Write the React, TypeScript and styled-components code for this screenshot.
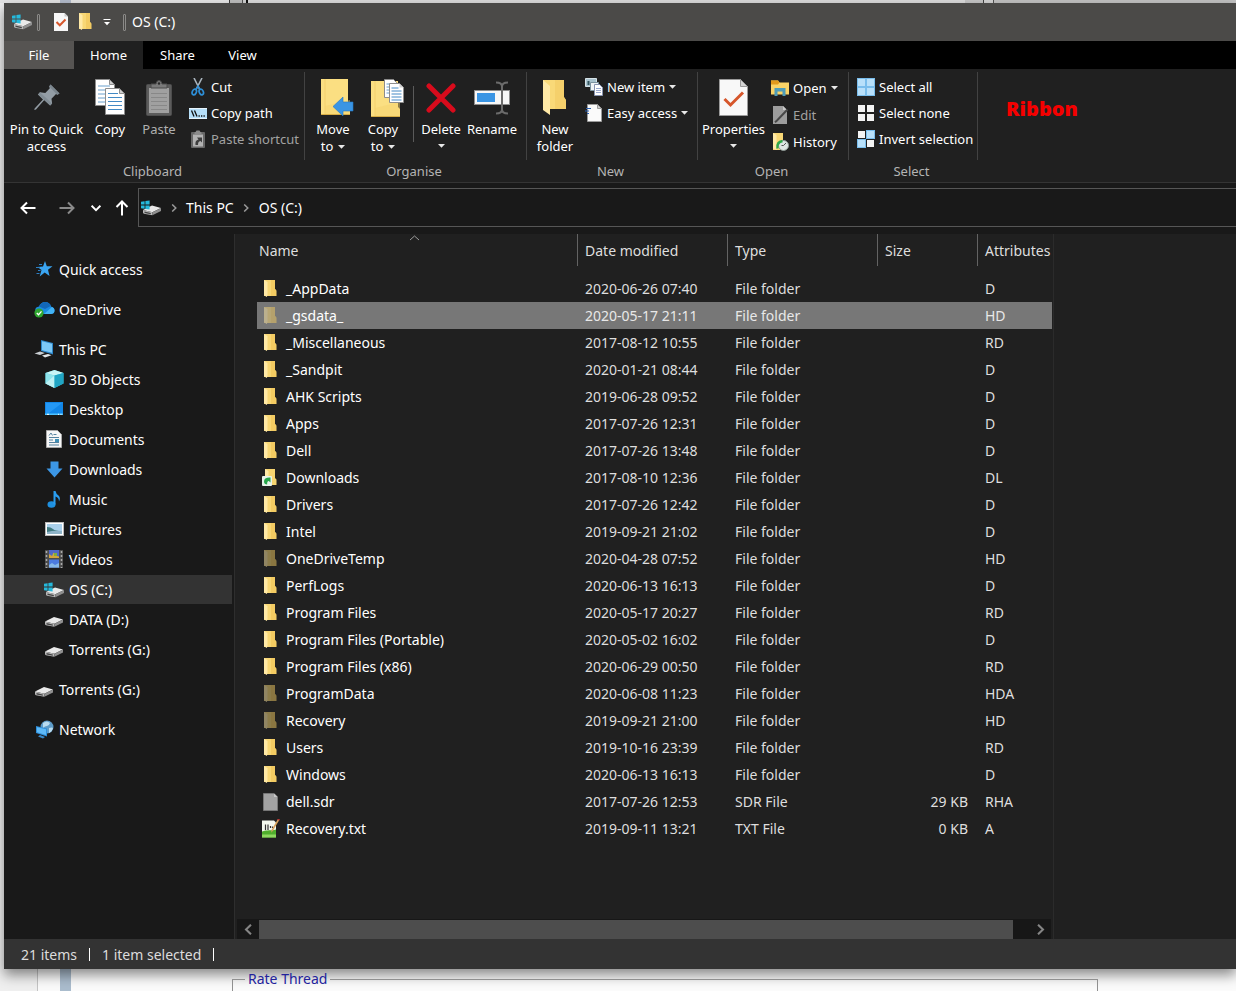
import React from "react";
import styled, { createGlobalStyle, css } from "styled-components";

const font = '"Noto Sans", "Open Sans", "Liberation Sans", sans-serif';

const GlobalStyle = createGlobalStyle`
  *, *::before, *::after { box-sizing: border-box; }
  html, body { margin: 0; padding: 0; }
  body { font-family: ${font}; font-size: 14px; color: #fff; overflow: hidden; }
  button { font: inherit; color: inherit; background: none; border: 0; padding: 0; margin: 0; cursor: default; }
  a { color: inherit; text-decoration: none; }
  svg { display: block; flex: none; }
`;

/* ---------- desktop behind the window ---------- */

const Page = styled.div`
  min-height: 100vh;
  display: flex;
  flex-direction: column;
  padding: 3px 0 0 4px;
  background:
    linear-gradient(
        to right,
        #e4e4e4 0 60px,
        #b4bccb 60px 71px,
        #e6e6e6 71px 229px,
        #3c3c3c 229px 230px,
        #bdbdbd 230px 242px,
        #555 242px 243px,
        #d0d0d0 243px 246px,
        #101010 246px 248px,
        #dcdcdc 248px 965px,
        #c6c6c6 965px 983px,
        #444 983px 984px,
        #d4d4d4 984px 993px,
        #555 993px 994px,
        #c2c2c2 994px
      )
      0 0 / 100% 3px no-repeat,
    linear-gradient(
      to right,
      #efefef 0 37px,
      #c4c4c4 37px 38px,
      #fafafa 38px 60px,
      #aabccd 60px 71px,
      #fbfbfb 71px
    );
`;

const Window = styled.main`
  flex: 1;
  display: flex;
  flex-direction: column;
  background: #191919;
  box-shadow: 0 6px 12px rgba(0, 0, 0, 0.45);
`;

const RateBox = styled.fieldset`
  margin: 0 138px 0 228px;
  height: 22px;
  padding: 0 12px;
  border: 1px solid #909090;
  border-bottom: 0;
`;

const RateLegend = styled.legend`
  padding: 0 3px;
  font-size: 14px;
  line-height: 20px;
  color: #22229c;
`;

/* ---------- title bar and tabs ---------- */

const TitleBar = styled.header`
  height: 38px;
  flex: none;
  display: flex;
  align-items: center;
  padding-left: 8px;
  background: #4b4a48;
`;

const TitleGrip = styled.span`
  width: 3px;
  height: 17px;
  border: 1px solid #8b8a88;
  border-radius: 1px;
`;

const QuickTools = styled.div`
  display: flex;
  align-items: center;
  gap: 11px;
  margin: 0 12px 0 14px;
`;

const TitleIcon = styled.span`
  margin-right: 5px;
`;

const WindowTitle = styled.h1`
  margin: 0 0 0 6px;
  font-size: 14px;
  font-weight: 400;
  line-height: 20px;
`;

const TabBar = styled.nav`
  height: 28px;
  flex: none;
  display: flex;
  background: #000;
`;

const Tab = styled.button<{ $kind?: "file" | "active"; $width: number }>`
  width: ${(p) => p.$width}px;
  font-size: 13px;
  background: ${(p) => (p.$kind === "file" ? "#565452" : p.$kind === "active" ? "#202020" : "transparent")};
`;

/* ---------- ribbon ---------- */

const RibbonBar = styled.section`
  flex: none;
  display: flex;
  padding-top: 3px;
  background: #202020;
  border-bottom: 1px solid #343434;
  font-size: 13px;
`;

const Group = styled.section<{ $width: number }>`
  width: ${(p) => p.$width}px;
  display: flex;
  flex-direction: column;
`;

const GroupTools = styled.div`
  height: 88px;
  display: flex;
  padding: 0 3px;
  border-right: 1px solid #424242;
`;

const GroupName = styled.h2`
  margin: 0;
  padding-right: 4px;
  font-size: 13px;
  font-weight: 400;
  line-height: 22px;
  text-align: center;
  color: #b4b4b4;
`;

const BigTool = styled.button<{ $width: number; $off?: boolean }>`
  width: ${(p) => p.$width}px;
  height: 88px;
  display: flex;
  flex-direction: column;
  align-items: center;
  line-height: 17px;
  white-space: nowrap;
  color: ${(p) => (p.$off ? "#b0b0b0" : "#fff")};
`;

const BigIcon = styled.span`
  height: 49px;
  padding-top: 2px;
  display: flex;
  align-items: center;
`;

const Line = styled.span`
  display: flex;
  align-items: center;
  gap: 5px;
  min-height: 15px;
`;

const ToolDivider = styled.span`
  width: 1px;
  height: 56px;
  margin: 14px 2px 0 5px;
  background: #5a5a5a;
`;

const SmallTools = styled.div`
  display: flex;
  flex-direction: column;
  padding: 2px 0 0 5px;
`;

const SmallTool = styled.button<{ $tall?: boolean; $off?: boolean }>`
  height: ${(p) => (p.$tall ? 27 : 26)}px;
  display: flex;
  align-items: center;
  gap: 4px;
  white-space: nowrap;
  color: ${(p) => (p.$off ? "#a2a2a2" : "#fff")};
`;

const Annotation = styled.strong`
  margin: 24px 0 0 28px;
  font-size: 20px;
  font-weight: 900;
  line-height: 26px;
  color: #f50000;
`;

/* ---------- address bar ---------- */

const NavBar = styled.nav`
  flex: none;
  display: flex;
  padding: 5px 0 7px;
`;

const NavButton = styled.button<{ $width: number }>`
  width: ${(p) => p.$width}px;
  height: 39px;
  display: flex;
  align-items: center;
  justify-content: center;
`;

const AddressBox = styled.div`
  flex: 1;
  height: 39px;
  display: flex;
  align-items: center;
  margin-left: 4px;
  padding-left: 2px;
  border: 1px solid #565656;
  border-right: 0;
  font-size: 14px;
`;

const CrumbArrow = styled.span`
  width: 25px;
  display: flex;
  justify-content: center;
`;

/* ---------- folder tree ---------- */

const Body = styled.div`
  flex: 1;
  display: flex;
`;

const Sidebar = styled.aside`
  width: 231px;
  flex: none;
  padding: 20px 2px 0 0;
  border-right: 1px solid #2e2e2e;
`;

const TreeGroup = styled.ul`
  margin: 0 0 10px;
  padding: 0;
  list-style: none;
`;

const TreeItem = styled.a<{ $deep?: boolean; $current?: boolean }>`
  height: 30px;
  display: flex;
  align-items: center;
  padding-left: ${(p) => (p.$deep ? 39 : 29)}px;
  ${(p) =>
    p.$current &&
    css`
      background: #333;
      border-top: 1px solid #191919;
    `}
`;

const TreeIcon = styled.span`
  width: 22px;
  margin-right: 4px;
  display: flex;
  justify-content: center;
`;

/* ---------- file list ---------- */

const ListPane = styled.section`
  flex: 1;
  min-width: 0;
  display: flex;
  flex-direction: column;
  background: #202020;
`;

const TableArea = styled.div`
  flex: 1;
  padding: 0 1px 0 22px;
`;

const FileTable = styled.table`
  width: 100%;
  table-layout: fixed;
  border-collapse: collapse;
  font-size: 14px;
`;

const HeadCell = styled.th<{ $width?: number }>`
  position: relative;
  ${(p) => p.$width && `width: ${p.$width}px;`}
  height: 41px;
  padding: 0;
  vertical-align: top;
  text-align: left;
  font-weight: 400;
  color: #dedede;
`;

const HeadLabel = styled.div<{ $first?: boolean }>`
  height: 32px;
  line-height: 33px;
  padding-left: ${(p) => (p.$first ? 2 : 7)}px;
  border-left: ${(p) => (p.$first ? "0" : "1px solid #636363")};
`;

const SortMark = styled.span`
  position: absolute;
  top: 1px;
  left: 152px;
`;

const FileRow = styled.tr<{ $selected?: boolean }>`
  height: 27px;
  color: ${(p) => (p.$selected ? "#e8e8e8" : "#dedede")};
  background: ${(p) => (p.$selected ? "#777" : "transparent")};
`;

const Cell = styled.td<{ $right?: boolean }>`
  padding: 0 9px 0 8px;
  text-align: ${(p) => (p.$right ? "right" : "left")};
  white-space: nowrap;
`;

const NameCell = styled.td`
  padding: 0 0 0 3px;
  color: #fff;
`;

const FileName = styled.span`
  display: flex;
  align-items: center;
  gap: 6px;
`;

const FileIcon = styled.span<{ $faded?: boolean }>`
  width: 20px;
  display: flex;
  justify-content: center;
  opacity: ${(p) => (p.$faded ? 0.5 : 1)};
`;

const ScrollBar = styled.div`
  height: 20px;
  display: flex;
  margin: 0 2px 0 2px;
  padding: 1px 0 0;
  background: #171717;
`;

const ScrollButton = styled.button`
  width: 22px;
  display: flex;
  align-items: center;
  justify-content: center;
`;

const ScrollTrack = styled.div`
  flex: 1;
  display: flex;
  padding-right: 16px;
`;

const ScrollThumb = styled.div`
  flex: 1;
  background: #4d4d4d;
`;

const PreviewPane = styled.aside`
  width: 183px;
  flex: none;
  background: #202020;
  border-left: 1px solid #2b2b2b;
`;

const StatusBar = styled.footer`
  height: 30px;
  flex: none;
  display: flex;
  align-items: center;
  gap: 12px;
  padding-left: 17px;
  background: #333;
  color: #dcdcdc;
  font-size: 14px;
`;

const StatusMark = styled.span`
  width: 1px;
  height: 13px;
  background: #fff;
`;

/* ---------- icons ---------- */

const Drive = () => (
  <g>
    <path d="M0 5.500 9 1l9 2.600-8.600 4.200z" fill="#e9e9e9" />
    <path d="M0 5.500 9.400 7.800v3L1 9.300Q0 9 0 8z" fill="#b9b9b9" />
    <path d="M9.400 7.800 18 3.600v3l-8.600 4.200z" fill="#8f8f8f" />
    <path d="M1.500 7l6.300 1.600v1.100L1.500 8.400z" fill="#444" />
  </g>
);
const DriveIcon = () => (
  <svg width="18" height="18" viewBox="0 -6 18 18"><Drive /></svg>
);
const SystemDriveIcon = () => (
  <svg width="20" height="16" viewBox="0 0 20 16">
    <g transform="translate(2 4.500)"><Drive /></g>
    <path d="M0 1.800 3.600 1.200v3.400H0zM4.400 1.100 8.600.4v4.200H4.400zM0 5.400h3.600v3.400L0 8.300zM4.400 5.400h4.200v4.200l-4.200-.7z" fill="#25b9dc" />
  </svg>
);
const FolderIcon = () => (
  <svg width="13" height="18" viewBox="0 0 13 18">
    <path d="M0 0h11v9l1.300 1.500V16H0z" fill="#f8d775" />
    <path d="M7 0h4v9l1.300 1.500V16H7z" fill="#f3cb62" />
    <path d="M0 0l3.500 2v13.200L2.800 17 0 15.200z" fill="#ffe9a6" />
  </svg>
);
const LinkFolderIcon = () => (
  <svg width="16" height="18" viewBox="0 0 16 18">
    <path d="M3 0h10v9l1.500 1.500V16H3z" fill="#f6d470" />
    <path d="M3 0l3.500 2v10H3z" fill="#ffe9a6" />
    <rect x="0" y="7" width="10" height="10" rx="1" fill="#e8f3ea" />
    <path d="M2 12.500C2 9.500 4.500 8.200 8.500 8.500v5L6.800 12c-1.300.2-1.800 1-1.600 3.500C3.200 15.500 2 14.500 2 12.500z" fill="#27a54a" />
  </svg>
);
const BlankFileIcon = () => (
  <svg width="15" height="18" viewBox="0 0 15 18">
    <path d="M.5.500H11L14.500 4v13.500H.5z" fill="#a2a2a2" stroke="#767676" />
    <path d="M11 .5V4h3.500z" fill="#c6c6c6" />
  </svg>
);
const TextFileIcon = () => (
  <svg width="19" height="19" viewBox="0 0 19 19">
    <path d="M1 1.500h12l2 2v14H1z" fill="#f4f8ee" />
    <path d="M1 12.500c5-2 9-.5 14-2v8H1z" fill="#4fae2c" />
    <path d="M1 15.500h14v3H1z" fill="#8fd860" />
    <path d="M4.500 11V5.500M7 5.500V11M9.500 7v2M11.500 7.500v1.500" stroke="#333" strokeWidth="1.200" />
    <path d="M18.300 1 12 11.500l-1.700 2.300.3-3L16.800.3z" fill="#d8a25a" />
    <path d="M18.500 1 16.700 0" stroke="#b33" strokeWidth="1.500" />
  </svg>
);
const TitleDocIcon = () => (
  <svg width="14" height="18" viewBox="0 0 14 18">
    <path d="M0 0h10.500L14 3.500V18H0z" fill="#f7f7f7" />
    <path d="M10.500 0v3.500H14z" fill="#c9c9c9" />
    <path d="M2.500 9 5.800 12.300 11.500 6.500" fill="none" stroke="#d6562b" strokeWidth="2" />
  </svg>
);
const CustomiseIcon = () => (
  <svg width="8" height="7" viewBox="0 0 8 7">
    <path d="M.5.500h7" stroke="#fff" />
    <path d="M1 3h6L4 6.300z" fill="#fff" />
  </svg>
);
const Caret = () => (
  <svg width="7" height="4" viewBox="0 0 7 4"><path d="M0 0h7L3.500 3.800z" fill="#e8e8e8" /></svg>
);
const PinIcon = () => (
  <svg width="26" height="27" viewBox="0 0 26 27">
    <path d="M16.500.500 25.500 9.500l-2.200 1.200-1.300-.6-4.500 4.600.6 4.800-2 2-5.800-5.400L2 25.500.3 26 .6 24.400 9 15.500 4 10.500l2-2.200 5.300.6L15.800 4.200l-.6-1.600z" fill="#939da5" />
    <path d="M16.500.500 25.500 9.500l-2.200 1.200L15.200 2.600z" fill="#7b868e" />
    <path d="M4 10.500 16.200 21.500l1.800-2L6 8.300z" fill="#828d95" />
  </svg>
);
const CopyIcon = () => (
  <svg width="31" height="37" viewBox="0 0 31 37">
    <path d="M.5.500h14l5 5v21H.5z" fill="#fff" stroke="#8d8d8d" />
    <path d="M14.500.500v5h5z" fill="#cfcfcf" stroke="#8d8d8d" />
    <path d="M3 7h12M3 11h14M3 15h14M3 19h14M3 23h14" stroke="#6aa0cc" />
    <path d="M10.500 9.500h14l5 5v21h-19z" fill="#fff" stroke="#8d8d8d" />
    <path d="M24.500 9.500v5h5z" fill="#cfcfcf" stroke="#8d8d8d" />
    <path d="M13 14.500h10M13 18.500h14M13 22.500h14M13 26.500h14M13 30.500h14" stroke="#4289c4" />
  </svg>
);
const PasteIcon = () => (
  <svg width="27" height="36" viewBox="0 0 27 36">
    <rect x=".5" y="4.500" width="25" height="31" rx="1" fill="#5c5c5c" stroke="#4d4d4d" />
    <rect x="3" y="8" width="20" height="25" fill="#a0a0a0" />
    <path d="M5 13.500h16M5 17.500h16M5 21.500h16M5 25.500h16M5 29.500h16" stroke="#888" />
    <path d="M5 8V4h5q.5-3.500 3-3.500T16 4h5v4z" fill="#7a7a7a" stroke="#4d4d4d" />
    <circle cx="13" cy="3.500" r="1.200" fill="#2a2a2a" />
  </svg>
);
const CutIcon = () => (
  <svg width="18" height="18" viewBox="0 0 18 18">
    <path d="M5 0 11 12M13 0 6.800 12" stroke="#a9b4bd" strokeWidth="1.600" />
    <ellipse cx="5.300" cy="14" rx="2" ry="2.900" transform="rotate(25 5.300 14)" fill="none" stroke="#2d8fd8" strokeWidth="1.700" />
    <ellipse cx="12.300" cy="14" rx="2" ry="2.900" transform="rotate(-25 12.300 14)" fill="none" stroke="#2d8fd8" strokeWidth="1.700" />
    <path d="M7 11.500l2-3.500 2 3.500" fill="none" stroke="#2d8fd8" strokeWidth="1.500" />
  </svg>
);
const CopyPathIcon = () => (
  <svg width="18" height="11" viewBox="0 0 18 11">
    <rect width="18" height="11" fill="#b5def8" />
    <path d="M0 .5h18M0 10.500h18" stroke="#e6f4fd" />
    <path d="M2.500 2.500 5 8.500M5.500 2.500 8 8.500" stroke="#111" strokeWidth="1.300" />
    <path d="M9.500 8h1.300M12 8h1.300M14.500 8h1.300" stroke="#111" strokeWidth="1.300" />
  </svg>
);
const PasteShortcutIcon = () => (
  <svg width="18" height="18" viewBox="0 0 18 18">
    <rect x="2" y="2" width="14" height="16" rx="1" fill="#686868" />
    <rect x="4" y="4.500" width="10" height="12" fill="#b2b2b2" />
    <path d="M5.500 2.500Q7 2 7.500.5h3Q11 2 12.500 2.500v2h-7z" fill="#8c8c8c" />
    <path d="M6.500 15c-.5-3 .5-5 3-5.500L8 7.500h5v5l-1.500-1.500C9.500 11.500 9 12.500 9 15z" fill="#3e3e3e" />
  </svg>
);
const BigFolder = () => (
  <g>
    <path d="M0 0h27v26l2 2v8H0z" fill="#fbdf82" />
    <path d="M4 0v36" stroke="#f3d06c" />
    <path d="M0 35.500h29" stroke="#d7ad45" />
    <path d="M4 27l25-6v14H4z" fill="#f6d36e" opacity=".5" />
  </g>
);
/* The folder body sits right of the label's centre, so both drawings carry blank space on their left. */
const MoveIcon = () => (
  <svg width="42" height="37" viewBox="-8 0 42 37">
    <g transform="translate(1)"><BigFolder /></g>
    <path d="M13 27.500 23 18v5h10v9H23v5z" fill="#3a95e4" stroke="#2379c6" strokeWidth=".6" />
  </svg>
);
const CopyToIcon = () => (
  <svg width="44" height="38" viewBox="-10 0 44 38">
    <g transform="translate(0 2)"><BigFolder /></g>
    <path d="M13.500.500h9l3 3v15h-12z" fill="#fff" stroke="#8d8d8d" />
    <path d="M15.500 5h6M15.500 8h8M15.500 11h8M15.500 14h8" stroke="#6aa0cc" />
    <path d="M18.500 4.500h10l4 4v15h-14z" fill="#fff" stroke="#8d8d8d" />
    <path d="M28.500 4.500v4h4z" fill="#cfcfcf" />
    <path d="M20.500 9h7M20.500 12h10M20.500 15h10M20.500 18h10M20.500 21h10" stroke="#4289c4" />
  </svg>
);
const DeleteIcon = () => (
  <svg width="30" height="30" viewBox="0 0 30 30">
    <path d="M3 3 27 27M27 3 3 27" stroke="#d90b1c" strokeWidth="5" strokeLinecap="round" />
  </svg>
);
const RenameIcon = () => (
  <svg width="36" height="34" viewBox="0 0 36 34">
    <rect x=".5" y="9.500" width="35" height="14" fill="#f7f7f7" stroke="#8d8d8d" />
    <rect x="3" y="12" width="18" height="9" fill="#3a95e4" />
    <path d="M22 1.500q6 0 6 4 0-4 6-4M28 5v24M22 32.500q6 0 6-4 0 4 6 4" fill="none" stroke="#6b6b6b" strokeWidth="2" />
  </svg>
);
const NewFolderIcon = () => (
  <svg width="24" height="35" viewBox="0 0 24 35">
    <path d="M0 0h21v17l2 3v9H0z" fill="#f9d978" />
    <path d="M12 0h9v17l2 3v9H12z" fill="#f2ca62" opacity=".6" />
    <path d="M0 0l7 6v29L0 30z" fill="#ffe9a6" />
  </svg>
);
const NewItemIcon = () => (
  <svg width="18" height="18" viewBox="0 0 18 18">
    <path d="M.5.500h11v8H.5z" fill="#a9c3ce" stroke="#d6e3e8" />
    <path d="M2.500 3h2v4h-2z" fill="#33545f" />
    <path d="M5.500 4.500h8v8h-8z" fill="#f0f4f6" stroke="#7c93a0" />
    <path d="M9.500 6.500h5l3 3v8h-8z" fill="#fff" stroke="#8793b0" />
    <path d="M11 10.500h5M11 12.500h5M11 14.500h5" stroke="#9aa9cf" />
  </svg>
);
const EasyAccessIcon = () => (
  <svg width="18" height="18" viewBox="0 0 18 18">
    <path d="M2.500.500h10l4 4v13h-14z" fill="#fafafa" stroke="#9b9b9b" />
    <path d="M12.500.500v4h4z" fill="#cdcdcd" stroke="#9b9b9b" />
    <path d="M1 4.500h5M0 7h4M2 9.500h2" stroke="#2b5fae" strokeWidth="1.200" />
  </svg>
);
const PropertiesIcon = () => (
  <svg width="29" height="37" viewBox="0 0 29 37">
    <path d="M.5.500h21l7 7v29H.5z" fill="#f8f8f8" stroke="#9b9b9b" />
    <path d="M21.500.500v7h7z" fill="#d4d4d4" stroke="#9b9b9b" />
    <path d="M5.500 20l6 6L24 13.500" fill="none" stroke="#d6562b" strokeWidth="3" />
  </svg>
);
const OpenIcon = () => (
  <svg width="18" height="16" viewBox="0 0 18 16">
    <path d="M0 .5h7l1.500 2H18v12H0z" fill="#f9d367" />
    <path d="M0 .5h7l1.500 2-1.500 2H0z" fill="#e29a1d" />
    <path d="M3.500 16V8h11v8h-3v-4.500h-5V16z" fill="#4f9cb8" />
  </svg>
);
const EditIcon = () => (
  <svg width="18" height="18" viewBox="0 0 18 18">
    <path d="M2 0h10l4 4v14H2z" fill="#9d9d9d" />
    <path d="M12 0v4h4z" fill="#c8c8c8" />
    <path d="M16.500 3.500 6 14.500l-2 1.700" stroke="#484848" strokeWidth="2" fill="none" />
  </svg>
);
const HistoryIcon = () => (
  <svg width="18" height="18" viewBox="0 0 18 18">
    <path d="M2 0h10v9l2 2v6H2z" fill="#f8d775" />
    <path d="M2 0l3.500 2v15L2 15.500z" fill="#ffe9a6" />
    <circle cx="12.500" cy="12.500" r="5" fill="#dfe6e3" stroke="#8f9a96" />
    <path d="M12.500 12.500l2.500-2.500M12.500 12.500h-2" stroke="#555" />
    <path d="M6.500 15.500q-1-6.500 5-7.500" fill="none" stroke="#2fa84a" strokeWidth="2.400" />
  </svg>
);

const tiles = [[0, 0], [9, 0], [0, 9], [9, 9]];
const SelectIcon = ({ on }: { on: boolean[] }) => (
  <svg width="18" height="18" viewBox="0 0 18 18">
    {on.every(Boolean) && <rect width="18" height="18" fill="#4ba3e0" />}
    {tiles.map(([x, y], i) =>
      on[i] ? (
        <rect key={i} x={x + 0.5} y={y + 0.5} width="8" height="8" fill="#b8e0fa" stroke="#79bdec" />
      ) : (
        <rect key={i} x={x + 1} y={y + 1} width="7" height="7" fill="#f3f3f3" />
      )
    )}
  </svg>
);

const ArrowIcon = ({ turn = 0, color = "#fff" }: { turn?: number; color?: string }) => (
  <svg width="16" height="16" viewBox="0 0 16 16">
    <path d="M15.500 8H1.500M7 2.500 1.500 8 7 13.500" fill="none" stroke={color} strokeWidth="2" transform={`rotate(${turn} 8 8)`} />
  </svg>
);
const ChevronIcon = ({ turn = 0, color = "#9a9a9a", size = 8 }: { turn?: number; color?: string; size?: number }) => (
  <svg width={size} height={size} viewBox="0 0 8 8">
    <path d="M2.200.500 5.800 4 2.200 7.500" fill="none" stroke={color} strokeWidth="1.500" transform={`rotate(${turn} 4 4)`} />
  </svg>
);
const SortIcon = () => (
  <svg width="11" height="6" viewBox="0 0 11 6"><path d="M1 5 5.500 1 10 5" fill="none" stroke="#9c9c9c" /></svg>
);

const StarIcon = () => (
  <svg width="18" height="16" viewBox="0 0 18 16">
    <path d="M10 0l1.800 5.200H17.500l-4.500 3.600 1.500 6.200-4.800-3.400-5 3.900L6.500 9 2.500 6l5.500-.5z" fill="#3aa5f2" />
    <path d="M4 3.500h3M1 6.500h4M3 9.500h2.500M1.500 12.500h3" stroke="#2b7fc4" />
  </svg>
);
const CloudIcon = () => (
  <svg width="21" height="17" viewBox="0 0 21 17">
    <path d="M5 13Q1 12 1.300 8.800 1.500 6 5 5.500 7 1 11 1q5 0 6 4.500 3.500 1 3.500 4T17 13z" fill="#1a8ae2" />
    <path d="M5 5.500Q7 1 11 1q4 0 5.700 4L11 8z" fill="#1267b8" />
    <path d="M10 13 18 6q2.800 1.200 2.500 4T17 13z" fill="#42b3f5" />
    <circle cx="5" cy="12" r="4.600" fill="#2fa52f" />
    <path d="M2.800 12l1.700 1.800 3-3.400" fill="none" stroke="#fff" strokeWidth="1.300" />
  </svg>
);
const ComputerIcon = () => (
  <svg width="20" height="18" viewBox="0 0 20 18">
    <path d="M7 0l12 3v11.500L7 11z" fill="#2c86c9" />
    <path d="M8 1.300l10 2.500v8.900L8 10.200z" fill="#7cc8f6" />
    <path d="M6 11.500l5 1.500-5 2-5.500-1.500z" fill="#c9ced2" />
    <path d="M8 15.500l6-1.500 3.500 1.200L11 17.500z" fill="#e2e5e7" />
  </svg>
);
const CubeIcon = () => (
  <svg width="19" height="18" viewBox="0 0 19 18">
    <path d="M9.500 0l9 3v10.500l-9 4.500-9-4.500V3z" fill="#37bfd6" />
    <path d="M.5 3l9 2.500V18l-9-4.500z" fill="#8ee4ec" />
    <path d="M.5 3l9-3 9 3-9 2.500z" fill="#c8f5f6" />
    <path d="M.5 13.500 9.500 5.500V18z" fill="#d3f7f8" opacity=".7" />
    <path d="M9.500 5.500 18.500 3v10.500L9.500 18z" fill="#20a5c4" />
  </svg>
);
const DesktopIcon = () => (
  <svg width="18" height="14" viewBox="0 0 18 14">
    <rect width="18" height="13" fill="#1186e8" />
    <path d="M0 11.500h18V13H0z" fill="#4cc2ff" />
    <path d="M2 12.300h2M13 12.300h1M15.500 12.300h1" stroke="#fff" />
    <path d="M1 1h16L4 11H1z" fill="#2498f5" />
  </svg>
);
const DocumentIcon = () => (
  <svg width="16" height="18" viewBox="0 0 16 18">
    <path d="M.5.500h11l4 4v13H.5z" fill="#f6f6f6" stroke="#a8a8a8" />
    <path d="M3 5.500 5 3l1.500 2.500M7.500 4.500h3M3 7.500h10M3 10h4M3 12.500h10M3 15h10" fill="none" stroke="#55829f" />
    <rect x="9" y="9" width="4" height="3" fill="#3e8fb5" />
  </svg>
);
const DownloadIcon = () => (
  <svg width="17" height="17" viewBox="0 0 17 17">
    <path d="M4.500.500h8v7H16.500L8.500 16.500.5 7.500h4z" fill="#3c97e6" />
  </svg>
);
const MusicIcon = () => (
  <svg width="16" height="19" viewBox="0 0 16 19">
    <ellipse cx="5.500" cy="14.500" rx="4" ry="3.300" fill="#1e90e0" />
    <path d="M7.500 1h2q.5 2.800 3 4.500 2.500 2.500.5 6 0-4-3.500-5V14.500h-2z" fill="#2a9df0" />
  </svg>
);
const PicturesIcon = () => (
  <svg width="19" height="14" viewBox="0 0 19 14">
    <rect x=".5" y=".5" width="18" height="13" fill="#fff" stroke="#b9b9b9" />
    <rect x="2" y="2" width="15" height="10" fill="#a9cfea" />
    <path d="M2 5q4 0 6 2t9 2v2H2z" fill="#3f7a80" />
    <path d="M2 10q7-2 15-1v3H2z" fill="#8fb4c9" />
  </svg>
);
const VideosIcon = () => (
  <svg width="18" height="18" viewBox="0 0 18 18">
    <rect width="18" height="18" fill="#4c4c4c" />
    <path d="M1.500 1v17M16.500 1v17" stroke="#aaa" strokeWidth="1.500" strokeDasharray="2 2" />
    <rect x="4" y="0" width="10" height="8" fill="#5068c8" />
    <rect x="4" y="9.500" width="10" height="8" fill="#4b7be0" />
    <path d="M4 8V4l3 2 1.500-3.500 2 3 3.500 1V8z" fill="#d3a53c" />
    <path d="M4 17.500V15l3-2 3 2 4-2v4.500z" fill="#86b8e8" />
    <path d="M9 3h3v3H9z" fill="#7fae3e" />
  </svg>
);
const NetworkIcon = () => (
  <svg width="19" height="19" viewBox="0 0 19 19">
    <circle cx="12" cy="7" r="6.500" fill="#5d9cc9" />
    <path d="M8 3q4-3 7 0-1 3-3 3T8 8zM14 8q3-1 4 0-1 4-4 5z" fill="#b9dcf0" />
    <path d="M1 6l11 2.500v8L1 13z" fill="#2c8fdc" />
    <path d="M2 7.300l9 2v5.700l-9-2.700z" fill="#5fbaf8" />
    <path d="M5 15l5 2-2 1.500-5-2z" fill="#3a89c9" />
  </svg>
);

/* ---------- data ---------- */

type TreeEntry = { label: string; icon: React.ReactNode; deep?: boolean; current?: boolean };

const tree: TreeEntry[][] = [
  [{ label: "Quick access", icon: <StarIcon /> }],
  [{ label: "OneDrive", icon: <CloudIcon /> }],
  [
    { label: "This PC", icon: <ComputerIcon /> },
    { label: "3D Objects", icon: <CubeIcon />, deep: true },
    { label: "Desktop", icon: <DesktopIcon />, deep: true },
    { label: "Documents", icon: <DocumentIcon />, deep: true },
    { label: "Downloads", icon: <DownloadIcon />, deep: true },
    { label: "Music", icon: <MusicIcon />, deep: true },
    { label: "Pictures", icon: <PicturesIcon />, deep: true },
    { label: "Videos", icon: <VideosIcon />, deep: true },
    { label: "OS (C:)", icon: <SystemDriveIcon />, deep: true, current: true },
    { label: "DATA (D:)", icon: <DriveIcon />, deep: true },
    { label: "Torrents (G:)", icon: <DriveIcon />, deep: true },
  ],
  [{ label: "Torrents (G:)", icon: <DriveIcon /> }],
  [{ label: "Network", icon: <NetworkIcon /> }],
];

const files: string[][] = [
  ["_AppData", "2020-06-26 07:40", "File folder", "", "D"],
  ["_gsdata_", "2020-05-17 21:11", "File folder", "", "HD"],
  ["_Miscellaneous", "2017-08-12 10:55", "File folder", "", "RD"],
  ["_Sandpit", "2020-01-21 08:44", "File folder", "", "D"],
  ["AHK Scripts", "2019-06-28 09:52", "File folder", "", "D"],
  ["Apps", "2017-07-26 12:31", "File folder", "", "D"],
  ["Dell", "2017-07-26 13:48", "File folder", "", "D"],
  ["Downloads", "2017-08-10 12:36", "File folder", "", "DL"],
  ["Drivers", "2017-07-26 12:42", "File folder", "", "D"],
  ["Intel", "2019-09-21 21:02", "File folder", "", "D"],
  ["OneDriveTemp", "2020-04-28 07:52", "File folder", "", "HD"],
  ["PerfLogs", "2020-06-13 16:13", "File folder", "", "D"],
  ["Program Files", "2020-05-17 20:27", "File folder", "", "RD"],
  ["Program Files (Portable)", "2020-05-02 16:02", "File folder", "", "D"],
  ["Program Files (x86)", "2020-06-29 00:50", "File folder", "", "RD"],
  ["ProgramData", "2020-06-08 11:23", "File folder", "", "HDA"],
  ["Recovery", "2019-09-21 21:00", "File folder", "", "HD"],
  ["Users", "2019-10-16 23:39", "File folder", "", "RD"],
  ["Windows", "2020-06-13 16:13", "File folder", "", "D"],
  ["dell.sdr", "2017-07-26 12:53", "SDR File", "29 KB", "RHA"],
  ["Recovery.txt", "2019-09-11 13:21", "TXT File", "0 KB", "A"],
];

const iconFor = (type: string, attrs: string) => {
  if (type === "SDR File") return <BlankFileIcon />;
  if (type === "TXT File") return <TextFileIcon />;
  return attrs === "DL" ? <LinkFolderIcon /> : <FolderIcon />;
};

/* ---------- parts ---------- */

type BigProps = { icon: React.ReactNode; lines: string[]; width: number; off?: boolean; menu?: boolean };

const Big = ({ icon, lines, width, off, menu }: BigProps) => (
  <BigTool type="button" $width={width} $off={off} disabled={off}>
    <BigIcon>{icon}</BigIcon>
    {lines.map((text, i) => (
      <Line key={i}>
        {text}
        {menu && i === lines.length - 1 && <Caret />}
      </Line>
    ))}
  </BigTool>
);

type SmallProps = { icon: React.ReactNode; label: string; tall?: boolean; off?: boolean; menu?: boolean };

const Small = ({ icon, label, tall, off, menu }: SmallProps) => (
  <SmallTool type="button" $tall={tall} $off={off} disabled={off}>
    {icon}
    {label}
    {menu && <Caret />}
  </SmallTool>
);

const Ribbon = () => (
  <RibbonBar>
    <Group $width={301}>
      <GroupTools>
        <Big icon={<PinIcon />} lines={["Pin to Quick", "access"]} width={79} />
        <Big icon={<CopyIcon />} lines={["Copy"]} width={48} />
        <Big icon={<PasteIcon />} lines={["Paste"]} width={50} off />
        <SmallTools>
          <Small icon={<CutIcon />} label="Cut" />
          <Small icon={<CopyPathIcon />} label="Copy path" />
          <Small icon={<PasteShortcutIcon />} label="Paste shortcut" off />
        </SmallTools>
      </GroupTools>
      <GroupName>Clipboard</GroupName>
    </Group>
    <Group $width={222}>
      <GroupTools>
        <Big icon={<MoveIcon />} lines={["Move", "to"]} width={50} menu />
        <Big icon={<CopyToIcon />} lines={["Copy", "to"]} width={50} menu />
        <ToolDivider />
        <Big icon={<DeleteIcon />} lines={["Delete", ""]} width={50} menu />
        <Big icon={<RenameIcon />} lines={["Rename"]} width={52} />
      </GroupTools>
      <GroupName>Organise</GroupName>
    </Group>
    <Group $width={171}>
      <GroupTools>
        <Big icon={<NewFolderIcon />} lines={["New", "folder"]} width={50} />
        <SmallTools>
          <Small icon={<NewItemIcon />} label="New item" menu />
          <Small icon={<EasyAccessIcon />} label="Easy access" menu />
        </SmallTools>
      </GroupTools>
      <GroupName>New</GroupName>
    </Group>
    <Group $width={151}>
      <GroupTools>
        <Big icon={<PropertiesIcon />} lines={["Properties", ""]} width={65} menu />
        <SmallTools>
          <Small icon={<OpenIcon />} label="Open" tall menu />
          <Small icon={<EditIcon />} label="Edit" tall off />
          <Small icon={<HistoryIcon />} label="History" tall />
        </SmallTools>
      </GroupTools>
      <GroupName>Open</GroupName>
    </Group>
    <Group $width={129}>
      <GroupTools>
        <SmallTools>
          <Small icon={<SelectIcon on={[true, true, true, true]} />} label="Select all" />
          <Small icon={<SelectIcon on={[false, false, false, false]} />} label="Select none" />
          <Small icon={<SelectIcon on={[false, true, true, false]} />} label="Invert selection" />
        </SmallTools>
      </GroupTools>
      <GroupName>Select</GroupName>
    </Group>
    <Annotation>Ribbon</Annotation>
  </RibbonBar>
);

const FileList = () => (
  <FileTable>
    <thead>
      <tr>
        <HeadCell scope="col">
          <HeadLabel $first>Name</HeadLabel>
          <SortMark><SortIcon /></SortMark>
        </HeadCell>
        <HeadCell scope="col" $width={150}><HeadLabel>Date modified</HeadLabel></HeadCell>
        <HeadCell scope="col" $width={150}><HeadLabel>Type</HeadLabel></HeadCell>
        <HeadCell scope="col" $width={100}><HeadLabel>Size</HeadLabel></HeadCell>
        <HeadCell scope="col" $width={75}><HeadLabel>Attributes</HeadLabel></HeadCell>
      </tr>
    </thead>
    <tbody>
      {files.map(([name, date, type, size, attrs]) => (
        <FileRow key={name} $selected={name === "_gsdata_"}>
          <NameCell>
            <FileName>
              <FileIcon $faded={attrs.startsWith("H")}>{iconFor(type, attrs)}</FileIcon>
              {name}
            </FileName>
          </NameCell>
          <Cell>{date}</Cell>
          <Cell>{type}</Cell>
          <Cell $right>{size}</Cell>
          <Cell>{attrs}</Cell>
        </FileRow>
      ))}
    </tbody>
  </FileTable>
);

export default function App() {
  return (
    <>
      <GlobalStyle />
      <Page>
        <Window>
          <TitleBar>
            <TitleIcon><SystemDriveIcon /></TitleIcon>
            <TitleGrip />
            <QuickTools>
              <button type="button" aria-label="Properties"><TitleDocIcon /></button>
              <button type="button" aria-label="New folder"><FolderIcon /></button>
              <button type="button" aria-label="Customise toolbar"><CustomiseIcon /></button>
            </QuickTools>
            <TitleGrip />
            <WindowTitle>OS (C:)</WindowTitle>
          </TitleBar>
          <TabBar>
            <Tab type="button" $kind="file" $width={70}>File</Tab>
            <Tab type="button" $kind="active" $width={69}>Home</Tab>
            <Tab type="button" $width={69}>Share</Tab>
            <Tab type="button" $width={61}>View</Tab>
          </TabBar>
          <Ribbon />
          <NavBar>
            <NavButton type="button" aria-label="Back" $width={48}><ArrowIcon /></NavButton>
            <NavButton type="button" aria-label="Forward" $width={30}><ArrowIcon turn={180} color="#8a8a8a" /></NavButton>
            <NavButton type="button" aria-label="Recent locations" $width={28}><ChevronIcon turn={90} color="#fff" size={10} /></NavButton>
            <NavButton type="button" aria-label="Up" $width={24}><ArrowIcon turn={90} /></NavButton>
            <AddressBox>
              <SystemDriveIcon />
              <CrumbArrow><ChevronIcon /></CrumbArrow>
              <a href="#this-pc">This PC</a>
              <CrumbArrow><ChevronIcon /></CrumbArrow>
              <a href="#os">OS (C:)</a>
            </AddressBox>
          </NavBar>
          <Body>
            <Sidebar>
              {tree.map((group, i) => (
                <TreeGroup key={i}>
                  {group.map((item) => (
                    <li key={item.label}>
                      <TreeItem href="#folder" $deep={item.deep} $current={item.current}>
                        <TreeIcon>{item.icon}</TreeIcon>
                        {item.label}
                      </TreeItem>
                    </li>
                  ))}
                </TreeGroup>
              ))}
            </Sidebar>
            <ListPane>
              <TableArea><FileList /></TableArea>
              <ScrollBar>
                <ScrollButton type="button" aria-label="Scroll left"><ChevronIcon turn={180} size={11} color="#858585" /></ScrollButton>
                <ScrollTrack><ScrollThumb /></ScrollTrack>
                <ScrollButton type="button" aria-label="Scroll right"><ChevronIcon size={11} color="#858585" /></ScrollButton>
              </ScrollBar>
            </ListPane>
            <PreviewPane />
          </Body>
          <StatusBar>
            <span>21 items</span>
            <StatusMark />
            <span>1 item selected</span>
            <StatusMark />
          </StatusBar>
        </Window>
        <RateBox>
          <RateLegend>Rate Thread</RateLegend>
        </RateBox>
      </Page>
    </>
  );
}
